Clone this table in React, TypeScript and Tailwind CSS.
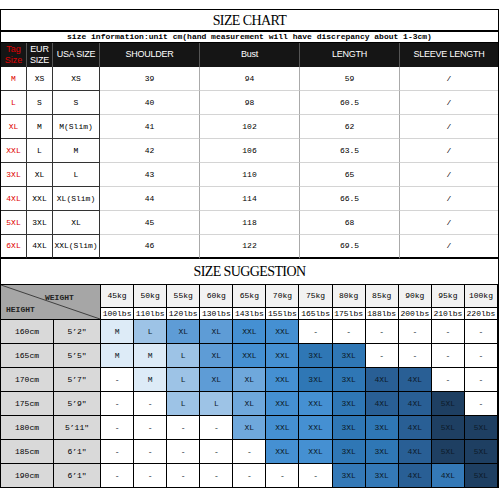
const mono = { fontFamily: '"Liberation Mono", "DejaVu Sans Mono", monospace' };

const chart = [
  ["M", "XS", "XS", "39", "94", "59", "/"],
  ["L", "S", "S", "40", "98", "60.5", "/"],
  ["XL", "M", "M(Slim)", "41", "102", "62", "/"],
  ["XXL", "L", "M", "42", "106", "63.5", "/"],
  ["3XL", "XL", "L", "43", "110", "65", "/"],
  ["4XL", "XXL", "XL(Slim)", "44", "114", "66.5", "/"],
  ["5XL", "3XL", "XL", "45", "118", "68", "/"],
  ["6XL", "4XL", "XXL(Slim)", "46", "122", "69.5", "/"],
];

const weights = [
  ["45kg", "100lbs"],
  ["50kg", "110lbs"],
  ["55kg", "120lbs"],
  ["60kg", "130lbs"],
  ["65kg", "143lbs"],
  ["70kg", "155lbs"],
  ["75kg", "165lbs"],
  ["80kg", "175lbs"],
  ["85kg", "188lbs"],
  ["90kg", "200lbs"],
  ["95kg", "210lbs"],
  ["100kg", "220lbs"],
];

const heights: [string, string, string[]][] = [
  ["160cm", "5’2″", ["M", "L", "XL", "XL", "XXL", "XXL", "-", "-", "-", "-", "-", "-"]],
  ["165cm", "5’5″", ["M", "M", "L", "XL", "XXL", "XXL", "3XL", "3XL", "-", "-", "-", "-"]],
  ["170cm", "5’7″", ["-", "M", "L", "XL", "XL", "XXL", "3XL", "3XL", "4XL", "4XL", "-", "-"]],
  ["175cm", "5’9″", ["-", "-", "L", "L", "XL", "XXL", "XXL", "3XL", "4XL", "4XL", "5XL", "-"]],
  ["180cm", "5’11″", ["-", "-", "-", "-", "XL", "XXL", "XXL", "3XL", "3XL", "4XL", "5XL", "5XL"]],
  ["185cm", "6’1″", ["-", "-", "-", "-", "-", "XXL", "XXL", "3XL", "3XL", "4XL", "5XL", "5XL"]],
  ["190cm", "6’1″", ["-", "-", "-", "-", "-", "-", "-", "3XL", "3XL", "4XL", "4XL", "5XL"]],
];

function cellColor(size: string, row: number, col: number) {
  if (row === 6 && (col === 7 || col === 8 || col === 10)) return "bg-[#3479b7]";
  switch (size) {
    case "M":
      return "bg-[#ddebf7]";
    case "L":
      return "bg-[#9dc3e6]";
    case "XL":
      return col >= 4 ? "bg-[#6fa8dc]" : "bg-[#5e9cd6]";
    case "XXL":
      return "bg-[#4590d2]";
    case "3XL":
      return "bg-[#2f77b5]";
    case "4XL":
      return "bg-[#295f95]";
    case "5XL":
      return "bg-[#1e3f62]";
    default:
      return "bg-white";
  }
}

export default function App() {
  return (
    <div className="w-[500px] h-[500px] bg-white pt-[9px]">
      <div className="w-[499px] border-t border-l border-r border-black">

        {/* SIZE CHART TITLE */}
        <div
          className="h-[22px] flex items-center justify-center border-b-2 border-black text-[14px] tracking-[-0.6px] text-black"
          style={{ fontFamily: '"Liberation Serif", serif' }}
        >
          SIZE CHART
        </div>
        <div
          className="h-[11px] flex items-center justify-center border-b border-black text-[8px] font-bold leading-none text-black"
          style={mono}
        >
          size information:unit cm(hand measurement will have discrepancy about 1-3cm)
        </div>

        {/* CHART TABLE */}
        <div className="grid grid-cols-[26px_26px_47px_100px_100px_100px_1fr]">
          <div className="h-[24px] bg-[#151515] border-r border-[#555] flex items-center justify-center text-center text-[9px] leading-[11px] text-[#e00000]" style={{ fontFamily: '"Liberation Sans", sans-serif' }}>
            Tag<br />Size
          </div>
          <div className="h-[24px] bg-[#151515] border-r border-[#555] flex items-center justify-center text-center text-[9px] leading-[11px] text-white tracking-tight" style={{ fontFamily: '"Liberation Sans", sans-serif' }}>
            EUR<br />SIZE
          </div>
          <div className="h-[24px] bg-[#151515] border-r border-[#555] flex items-center justify-center text-[9px] text-white tracking-tight" style={{ fontFamily: '"Liberation Sans", sans-serif' }}>
            USA SIZE
          </div>
          {["SHOULDER", "Bust", "LENGTH", "SLEEVE LENGTH"].map((h, i) => (
            <div
              key={h}
              className={i < 3 ? "h-[24px] bg-[#151515] border-r border-[#555] flex items-center justify-center text-[9px] text-white tracking-tight" : "h-[24px] bg-[#151515] flex items-center justify-center text-[9px] text-white tracking-tight"}
              style={{ fontFamily: '"Liberation Sans", sans-serif' }}
            >
              {h}
            </div>
          ))}

          {chart.map((row, r) =>
            row.map((v, c) => {
              const last = r === chart.length - 1;
              let cls = "h-[24px] flex items-center justify-center text-[8px] ";
              if (c === 0) cls += "text-[#e00000] border-r border-[#333] ";
              else if (c < 3) cls += "text-black border-r border-[#333] ";
              else if (c < 6) cls += "text-black border-r border-[#aaa] ";
              else cls += "text-black ";
              if (last) cls += "border-b-2 border-b-black";
              else if (c < 3) cls += "border-b border-b-[#333]";
              else cls += "border-b border-b-[#d4d4d4]";
              return (
                <div key={`${r}-${c}`} className={cls} style={mono}>
                  {v}
                </div>
              );
            })
          )}
        </div>

        {/* SIZE SUGGESTION TITLE */}
        <div
          className="h-[26px] flex items-center justify-center border-b border-black text-[14px] tracking-[-0.6px] text-black"
          style={{ fontFamily: '"Liberation Serif", serif' }}
        >
          SIZE SUGGESTION
        </div>

        {/* SUGGESTION GRID */}
        <div className="grid grid-cols-[53px_47px_repeat(12,minmax(0,1fr))] grid-rows-[23px_12px_repeat(7,24px)] text-black" style={mono}>
          <div className="col-span-2 row-span-2 relative bg-[#a6a6a6] border-r border-b border-black">
            <svg className="absolute inset-0 w-full h-full" viewBox="0 0 100 35" preserveAspectRatio="none">
              <line x1="0" y1="0" x2="100" y2="35" stroke="#222" strokeWidth="0.8" />
            </svg>
            <span className="absolute left-[44px] top-[9px] text-[8px] leading-none font-bold text-[#222]">WEIGHT</span>
            <span className="absolute left-[5px] top-[21px] text-[8px] leading-none font-bold text-[#222]">HEIGHT</span>
          </div>
          {weights.map(([kg]) => (
            <div key={kg} className="bg-[#f2f2f2] border-r border-b border-black flex items-center justify-center text-[8px]">
              {kg}
            </div>
          ))}
          {weights.map(([, lbs]) => (
            <div key={lbs} className="bg-white border-r border-b border-black flex items-center justify-center text-[8px] leading-none">
              {lbs}
            </div>
          ))}

          {heights.map(([cm, ft, sizes], r) => (
            <div key={cm} className="contents">
              <div className="bg-[#d9d9d9] border-r border-b border-black flex items-center justify-center text-[8px]">
                {cm}
              </div>
              <div className="bg-[#d9d9d9] border-r border-b border-black flex items-center justify-center text-[8px]">
                {ft}
              </div>
              {sizes.map((s, c) => (
                <div
                  key={c}
                  className={`${cellColor(s, r, c)} border-r border-b border-black flex items-center justify-center text-[8px] text-[#0d1b2a]`}
                >
                  {s}
                </div>
              ))}
            </div>
          ))}
        </div>
      </div>
    </div>
  );
}
